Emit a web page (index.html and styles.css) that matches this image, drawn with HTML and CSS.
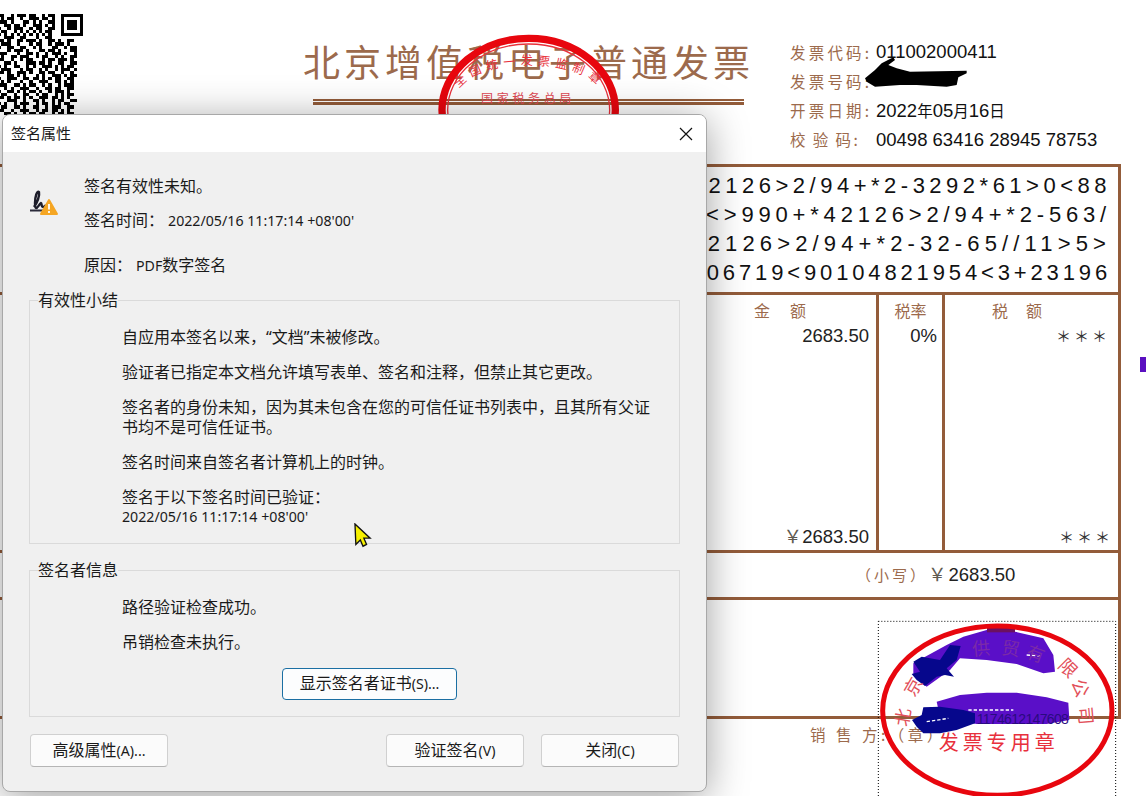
FILE: index.html
```html
<!DOCTYPE html>
<html lang="zh-CN">
<head>
<meta charset="utf-8">
<title>签名属性</title>
<link rel="stylesheet" href="styles.css">
</head>
<body>
<main class="invoice">
  <header class="head">
    <svg class="qr" viewBox="0 0 27 32" aria-hidden="true">
      <path class="qr-mods" d="M0 .5h2m2 0h1m1 0h3m1 0h2m2 0h1m1 0h2M1 1.5h1m1 0h2m2 0h1m2 0h3m1 0h2m1 0h1M0 2.5h3m1 0h1m3 0h2m1 0h1m1 0h1m2 0h2M2 3.5h2m1 0h2m1 0h1m2 0h3m1 0h1m1 0h1M0 4.5h1m2 0h1m1 0h3m2 0h1m1 0h2m2 0h2M1 5.5h2m2 0h1m1 0h1m1 0h1m1 0h1m1 0h1m1 0h2M0 6.5h1m1 0h1m1 0h1m1 0h1m1 0h1m1 0h1m1 0h1m1 0h1m1 0h1M2 7.5h3m2 0h2m3 0h1m2 0h2M0 8.5h2m1 0h1m2 0h2m1 0h3m1 0h1m2 0h2m1 0h1m2 0h2M1 9.5h3m2 0h1m3 0h1m1 0h2m2 0h1m1 0h3m1 0h1M0 10.5h1m2 0h2m2 0h2m2 0h1m1 0h1m3 0h2m2 0h1m1 0h2M3 11.5h1m1 0h3m1 0h1m3 0h2m1 0h2m1 0h1m3 0h2M0 12.5h3m3 0h1m2 0h2m1 0h1m2 0h1m1 0h3m1 0h1m2 0h1M1 13.5h1m2 0h2m1 0h3m2 0h1m1 0h2m2 0h1m1 0h1m2 0h2M0 14.5h2m2 0h1m2 0h1m1 0h2m3 0h1m1 0h2m1 0h3m1 0h1M2 15.5h2m1 0h1m3 0h3m1 0h2m1 0h1m2 0h2m2 0h2M0 16.5h1m1 0h1m2 0h2m2 0h1m1 0h1m2 0h3m1 0h1m1 0h1m1 0h2M1 17.5h3m3 0h1m1 0h2m2 0h1m1 0h1m2 0h1m1 0h3m1 0h1M0 18.5h2m1 0h1m2 0h3m1 0h1m2 0h2m1 0h2m2 0h1m2 0h1M3 19.5h2m1 0h1m1 0h1m3 0h1m1 0h1m2 0h3m1 0h1m1 0h2M0 20.5h1m2 0h3m2 0h2m1 0h2m1 0h1m1 0h1m1 0h2m2 0h2M1 21.5h1m1 0h1m3 0h1m2 0h1m2 0h3m2 0h2m1 0h1m1 0h1M0 22.5h3m2 0h2m1 0h1m1 0h2m2 0h1m1 0h1m2 0h1m1 0h3M2 23.5h1m1 0h1m2 0h3m2 0h1m2 0h2m1 0h2m2 0h2M0 24.5h1m2 0h2m1 0h1m1 0h1m1 0h2m1 0h1m2 0h1m1 0h3m1 0h1M1 25.5h2m2 0h1m2 0h2m2 0h1m1 0h2m2 0h1m1 0h1m1 0h2M0 26.5h2m1 0h1m1 0h2m1 0h1m1 0h1m2 0h3m1 0h2m1 0h1m1 0h1M3 27.5h3m2 0h1m2 0h2m1 0h1m2 0h1m1 0h2m2 0h2M0 28.5h1m1 0h1m2 0h1m1 0h3m2 0h1m1 0h2m1 0h1m1 0h1m1 0h2M1 29.5h2m2 0h2m1 0h1m2 0h2m2 0h1m1 0h3m2 0h2M0 30.5h2m2 0h1m2 0h3m2 0h1m1 0h2m1 0h2m1 0h1m1 0h1M2 31.5h2m1 0h1m2 0h1m1 0h2m1 0h2m2 0h1m1 0h2m1 0h2"/>
      <rect class="qr-ring" x="20.5" y=".5" width="6" height="6"/>
      <rect x="22" y="2" width="3" height="3"/>
    </svg>
    <div class="heading">
      <h1 class="title">北京增值税电子普通发票</h1>
      <div class="title-rule"></div>
    </div>
    <dl class="meta">
      <dt>发票代码:</dt><dd>011002000411</dd>
      <dt>发票号码:</dt><dd></dd>
      <dt>开票日期:</dt><dd>2022<span class="cjk">年</span>05<span class="cjk">月</span>16<span class="cjk">日</span></dd>
      <dt class="wide">校 验 码:</dt><dd>00498 63416 28945 78753</dd>
    </dl>
  </header>

  <section class="grid-table">
    <div class="cipher">
      <div class="line-a">2126&gt;2/94+*2-3292*61&gt;0&lt;88</div>
      <div class="line-b">&lt;&gt;990+*42126&gt;2/94+*2-563/</div>
      <div class="line-c">2126&gt;2/94+*2-32-65//11&gt;5&gt;</div>
      <div class="line-d">06719&lt;90104821954&lt;3+23196</div>
    </div>
    <div class="items">
      <div class="col col-amount">
        <div class="col-head">金　额</div>
        <div class="val">2683.50</div>
        <div class="val col-end"><span class="yen">￥</span>2683.50</div>
      </div>
      <div class="col col-rate">
        <div class="col-head">税率</div>
        <div class="val">0%</div>
      </div>
      <div class="col col-tax">
        <div class="col-head">税　额</div>
        <div class="val stars">＊＊＊</div>
        <div class="val stars stars-end col-end">＊＊＊</div>
      </div>
    </div>
    <div class="total"><span class="label">（小写）</span><span class="yen">￥</span>2683.50</div>
    <div class="remark"></div>
  </section>
  <div class="seller">销 售 方:（章）</div>

  <svg class="seal-top" viewBox="0 0 1380 510" aria-hidden="true">
    <defs><path id="arc-top" d="M505 285A212 90 0 0 1 930 285"/></defs>
    <ellipse class="ring-thick" cx="716" cy="330" rx="260" ry="215"/>
    <ellipse class="ring-thin" cx="716" cy="330" rx="243" ry="198"/>
    <text class="seal-small"><textPath href="#arc-top" startOffset="50%" text-anchor="middle">全国统一发票监制章</textPath></text>
    <text class="seal-small seal-bottom" x="714" y="308" text-anchor="middle">国家税务总局</text>
  </svg>

  <svg class="seal-bottom-box" viewBox="0 0 1338 828" aria-hidden="true">
    <rect class="dots" x="535" y="304" width="712" height="540"/>
    <path class="blob" d="M640 430L740 375 790 350 860 330 945 335 1030 355 1060 405 1065 455 1030 460 950 432 860 420 780 415 750 450 680 500 640 465Z"/>
    <path class="blob" d="M710 545L780 525 860 518 950 518 1040 532 1105 548 1108 600 1040 612 830 612 720 590Z"/>
    <rect class="blob-dark" x="861" y="315" width="84" height="22"/>
    <path class="ink" d="M635 462L660 455 640 425 665 410 690 415 720 420 750 375 782 378 770 420 740 445 762 470 735 465 710 470 675 498 650 480Z"/>
    <path class="ink" d="M636 600L665 585 670 562 720 560 790 570 825 580 825 610 770 630 720 640 670 640 650 620Z"/>
    <path class="scratch" d="M805 570H940M980 405L1020 408M680 605L745 595"/>
    <ellipse class="ring-red" cx="892" cy="572" rx="344" ry="254"/>
    <g class="seal-chars">
      <text transform="translate(628 595) rotate(-80)">北</text>
      <text transform="translate(656 510) rotate(-60)">京</text>
      <text class="dim" transform="translate(845 405) rotate(-5)">供</text>
      <text class="dim" transform="translate(930 405) rotate(8)">贸</text>
      <text class="dim" transform="translate(1000 420) rotate(20)">有</text>
      <text transform="translate(1090 458) rotate(45)">限</text>
      <text transform="translate(1123 511) rotate(68)">公</text>
      <text transform="translate(1138 589) rotate(85)">司</text>
      <text class="seal-number" x="830" y="612">1174612147608</text>
      <text class="seal-name" x="896" y="690" text-anchor="middle">发票专用章</text>
    </g>
  </svg>

  <svg class="redact" viewBox="330 90 330 120" aria-hidden="true">
    <path d="M345 175L375 150 395 130 430 112 435 120 415 135 440 145 480 155 650 152 650 160 625 172 620 195 590 200 500 195 450 195 375 200 350 185Z"/>
  </svg>
  <div class="side-mark"></div>

  <div class="dialog" role="dialog" aria-label="签名属性">
    <div class="titlebar">
      <span>签名属性</span>
      <svg class="close" viewBox="0 0 14 14" aria-hidden="true"><path d="M1 1L13 13M13 1L1 13"/></svg>
    </div>
    <div class="body">
      <div class="status">
        <svg class="status-icon" viewBox="0 0 32 28" aria-hidden="true">
          <path class="pen" d="M5 18C8 14 11 7 10 3 8 1 6 8 6 14 6 17 6 19 7 19 9 19 10 15 12 14 13 14 12 18 14 18 15 18 16 17 17 16"/>
          <path class="pen-line" d="M1 21.500H14"/>
          <path class="warn" d="M20 11L28 25H12Z"/>
          <path class="warn-mark" d="M20 15V20.500M20 22V24"/>
        </svg>
        <div class="status-text">
          <p class="status-line">签名有效性未知。</p>
          <p class="status-line">签名时间：<span class="latin indent">2022/05/16 11:17:14 +08'00'</span></p>
          <p class="status-line reason">原因：<span class="latin indent">PDF</span>数字签名</p>
        </div>
      </div>

      <fieldset class="group">
        <legend>有效性小结</legend>
        <div class="group-body">
          <p>自应用本签名以来，“文档”未被修改。</p>
          <p>验证者已指定本文档允许填写表单、签名和注释，但禁止其它更改。</p>
          <p>签名者的身份未知，因为其未包含在您的可信任证书列表中，且其所有父证书均不是可信任证书。</p>
          <p>签名时间来自签名者计算机上的时钟。</p>
          <p class="last">签名于以下签名时间已验证：<br><span class="latin">2022/05/16 11:17:14 +08'00'</span></p>
        </div>
      </fieldset>

      <fieldset class="group second">
        <legend>签名者信息</legend>
        <div class="group-body">
          <p>路径验证检查成功。</p>
          <p>吊销检查未执行。</p>
          <button class="btn btn-focus" type="button">显示签名者证书<span class="latin">(S)...</span></button>
        </div>
      </fieldset>

      <div class="actions">
        <button class="btn btn-foot push" type="button">高级属性<span class="latin">(A)...</span></button>
        <button class="btn btn-foot" type="button">验证签名<span class="latin">(V)</span></button>
        <button class="btn btn-foot" type="button">关闭<span class="latin">(C)</span></button>
      </div>
    </div>
  </div>

  <svg class="cursor" viewBox="0 0 20 28" aria-hidden="true">
    <path d="M1 1L18 17 11 17 14 24 10 26 7 19 2 24Z"/>
  </svg>
</main>
</body>
</html>
```

FILE: styles.css
```css
* { box-sizing: border-box; }
html, body { margin: 0; padding: 0; background: #fff; }
body {
  width: 1146px;
  height: 796px;
  overflow: hidden;
  font-family: "Noto Sans", "Noto Sans CJK SC", sans-serif;
}
.invoice {
  position: relative;
  width: 1146px;
  height: 796px;
  overflow: hidden;
  background: #fff;
  color: #000;
  --brown: #935c3a;
  --ink: #9c6a4c;
}

/* header */
.head { display: flex; height: 164px; }
.qr { flex: none; width: 85px; height: 101px; margin: 14px 0 0 -2px; shape-rendering: crispEdges; }
.qr-mods { stroke: #000; stroke-width: 1; fill: none; }
.qr-ring { fill: none; stroke: #000; stroke-width: 1; }
.heading { flex: none; width: 449px; margin: 41px 0 0 220px; }
.title {
  margin: 0;
  font: 400 37px/40px "Noto Sans CJK SC", sans-serif;
  letter-spacing: 4px;
  white-space: nowrap;
  color: var(--ink);
}
.title-rule {
  height: 6px;
  margin: 18px 8px 0 10px;
  border-top: 2px solid var(--brown);
  border-bottom: 3px solid var(--brown);
}
.meta {
  margin: 38px 0 0 38px;
  display: grid;
  grid-template-columns: 86px auto;
  grid-auto-rows: 29.2px;
  align-items: center;
  align-content: start;
}
.meta dt {
  font: 400 15.500px/1 "Noto Sans CJK SC", sans-serif;
  letter-spacing: 3.200px;
  color: var(--ink);
  white-space: nowrap;
}
.meta dt.wide { word-spacing: -1px; letter-spacing: 2.400px; }
.meta dd {
  margin: 0;
  font: 18.500px/1 "Liberation Sans", "Noto Sans CJK SC", sans-serif;
  color: #111;
  white-space: nowrap;
}
.cjk { font-family: "Noto Sans CJK SC", sans-serif; font-size: 15.500px; }

/* table */
.grid-table {
  width: 1121px;
  height: 555px;
  border: solid var(--brown);
  border-width: 3px 3px 3px 0;
  display: flex;
  flex-direction: column;
}
.cipher {
  height: 128px;
  flex: none;
  padding: 4px 7px 0 0;
  border-bottom: 3px solid var(--brown);
  font: 22px/29px "Liberation Sans", sans-serif;
  text-align: right;
  color: #111;
  white-space: nowrap;
}
.line-a { letter-spacing: 4.500px; }
.line-b { letter-spacing: 4.820px; }
.line-c { letter-spacing: 5.140px; }
.line-d { letter-spacing: 3.860px; }
.items {
  height: 258px;
  flex: none;
  display: grid;
  grid-template-columns: 879px 66px 1fr;
  border-bottom: 3px solid var(--brown);
}
.col { display: flex; flex-direction: column; min-height: 0; }
.col-amount, .col-rate { border-right: 3px solid var(--brown); }
.col-head {
  margin-top: 6px;
  font: 400 16px/18px "Noto Sans CJK SC", sans-serif;
  color: var(--ink);
  text-align: center;
  white-space: pre;
}
.col-amount .col-head { margin-left: 686px; letter-spacing: 2px; }
.col-tax .col-head { letter-spacing: 1px; padding-right: 28px; }
.val {
  margin-top: 5px;
  padding-right: 7px;
  text-align: right;
  font: 18.500px/24px "Liberation Sans", "Noto Sans CJK SC", sans-serif;
  color: #222;
  white-space: nowrap;
}
.col-rate .val { padding-right: 5px; }
.col-end { margin-top: auto; margin-bottom: 1px; }
.stars { padding-right: 8px; font: 15px/24px "Noto Sans CJK SC", sans-serif; letter-spacing: 3px; color: #333; }
.stars-end { padding-right: 5px; }
.yen { font-family: "Noto Sans CJK SC", sans-serif; color: #5f5a50; }
.total {
  height: 47px;
  flex: none;
  padding-left: 856px;
  border-bottom: 3px solid var(--brown);
  font: 18.500px/41px "Liberation Sans", "Noto Sans CJK SC", sans-serif;
  color: #222;
  white-space: nowrap;
}
.total .label { font: 15px/41px "Noto Sans CJK SC", sans-serif; letter-spacing: 3px; color: var(--ink); }
.total .yen { letter-spacing: 2px; }
.remark { flex: 1; }
.seller {
  padding: 5px 0 0 810px;
  font: 15.500px/20px "Noto Sans CJK SC", sans-serif;
  letter-spacing: 3.500px;
  color: var(--ink);
  white-space: pre;
}

/* stamps and overlays */
.seal-top { position: absolute; left: 290px; top: 0; width: 460px; height: 170px; }
.ring-thick { fill: none; stroke: #e8060e; stroke-width: 22; }
.ring-thin { fill: none; stroke: #e9303a; stroke-width: 4; }
.seal-small { font: 36px "Noto Sans CJK SC", sans-serif; letter-spacing: 15px; fill: #e8303c; }
.seal-bottom { font-size: 36px; letter-spacing: 11px; fill: #e04a55; }
.seal-bottom-box { position: absolute; left: 700px; top: 520px; width: 446px; height: 276px; }
.dots { fill: none; stroke: #000; stroke-width: 3; stroke-dasharray: 3 6; }
.blob { fill: #5a0fc8; }
.blob-dark { fill: #6b1060; }
.ink { fill: #06078c; }
.scratch { fill: none; stroke: #fff; stroke-width: 4; stroke-dasharray: 10 6; }
.ring-red { fill: none; stroke: #e8060e; stroke-width: 15; }
.seal-chars text { font: 54px "Noto Sans CJK SC", sans-serif; fill: #e2505a; text-anchor: middle; }
.seal-chars .dim { fill: #7b2aa8; }
.seal-chars .seal-number { font: 42px "Liberation Sans", sans-serif; letter-spacing: -2px; fill: #2a0a80; text-anchor: start; }
.seal-chars .seal-name { font-size: 60px; letter-spacing: 12px; fill: #e8303c; }
.redact { position: absolute; left: 860px; top: 50px; width: 110px; height: 40px; }
.redact path { fill: #000; }
.side-mark { position: absolute; left: 1140px; top: 357px; width: 6px; height: 15px; background: #5a10c0; }

/* dialog */
.dialog {
  position: absolute;
  left: 2px;
  top: 114px;
  width: 705px;
  height: 678px;
  border-radius: 8px;
  overflow: hidden;
  background: #f0f0f0;
  border: 1px solid #a8a8a8;
  box-shadow: 0 6px 40px rgba(0, 0, 0, .38);
  color: #1a1a1a;
  font-size: 16px;
  line-height: 19px;
}
.latin { font-size: 14.200px; }
.titlebar {
  height: 37px;
  padding: 0 13px 0 8px;
  display: flex;
  align-items: center;
  justify-content: space-between;
  background: #fff;
  font-size: 15px;
}
.close { width: 14px; height: 14px; }
.close path { fill: none; stroke: #111; stroke-width: 1.200; }
.body { padding: 25px 26px 0; }
.status { display: flex; }
.status-icon { flex: none; width: 32px; height: 28px; margin: 12px 0 0 0; }
.pen { fill: none; stroke: #1d1d2a; stroke-width: 2.400; }
.pen-line { fill: none; stroke: #2b2b3a; stroke-width: 1.800; }
.warn { fill: #f5a623; stroke: #f5a623; stroke-width: 2; stroke-linejoin: round; }
.warn-mark { fill: none; stroke: #fff; stroke-width: 1.800; }
.status-text { margin-left: 23px; }
.status-line { margin: 0 0 15px; }
.status-line.reason { margin: 26px 0 0; }
.indent { margin-left: 4px; }
.group {
  margin: 16px 0 0;
  padding: 0;
  min-width: 0;
  border: 1px solid #dadada;
}
.group legend { margin-left: 8px; padding: 0; font-size: 16px; line-height: 19px; }
.group-body { padding: 18px 20px 16px 92px; line-height: 19.500px; }
.group-body p { margin: 0 0 15.500px; max-width: 535px; }
.group-body p.last { margin: 0; }
.second { margin-top: 17px; }
.btn {
  display: block;
  height: 33px;
  padding: 0;
  font: 16px/1 "Noto Sans", "Noto Sans CJK SC", sans-serif;
  color: #1a1a1a;
  background: #fbfbfb;
  border: 1px solid #d0d0d0;
  border-bottom-color: #b5b5b5;
  border-radius: 4px;
}
.btn-focus { width: 175px; height: 32px; margin-left: 160px; border-color: #1b6fa3; background: #fcfdfe; }
.actions { display: flex; gap: 17px; margin-top: 17px; padding: 0 1px; }
.btn-foot { width: 138px; }
.push { margin-right: auto; }
.cursor { position: absolute; left: 354px; top: 523px; width: 18px; height: 25px; }
.cursor path { fill: #f6f000; stroke: #111; stroke-width: 1.500; }
```
